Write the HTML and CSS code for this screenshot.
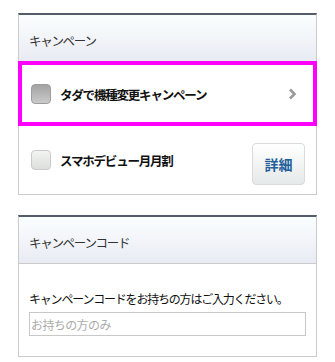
FILE: index.html
```html
<!DOCTYPE html>
<html lang="ja">
<head>
  <meta charset="UTF-8">
  <title>キャンペーン</title>
  <link rel="stylesheet" href="styles.css">
</head>
<body>
  <div class="card">
    <div class="card-head">キャンペーン</div>

    <div class="row row-active">
      <span class="check check-dark"></span>
      <span class="row-label">タダで機種変更キャンペーン</span>
      <svg class="chevron" width="9" height="12" viewBox="0 0 9 12">
        <path d="M2 1.5 L6.5 6 L2 10.5" fill="none" stroke="#9a9a9a" stroke-width="2.6"/>
      </svg>
    </div>

    <div class="row">
      <span class="check"></span>
      <span class="row-label">スマホデビュー月月割</span>
      <button class="detail-btn">詳細</button>
    </div>
  </div>

  <div class="card">
    <div class="card-head">キャンペーンコード</div>
    <div class="card-body">
      <p class="note">キャンペーンコードをお持ちの方はご入力ください。</p>
      <input type="text" class="code-input" placeholder="お持ちの方のみ">
    </div>
  </div>
</body>
</html>
```

FILE: styles.css
```css
body {
  margin: 0;
  padding: 13px 18px 0;
  background: #fff;
  font-family: "Noto Sans CJK JP", "Noto Sans", sans-serif;
  font-size: 12px;
  color: #111;
}
.card {
  border: 1px solid #cbcbcb;
  border-top: 2px solid #545c69;
  margin-bottom: 20px;
}
.card-head {
  height: 46px;
  line-height: 51px;
  padding-left: 10px;
  background: linear-gradient(#fbfefe, #e9ebf4);
  border-bottom: 1px solid #cbcbcb;
  color: #333;
  font-size: 12.5px;
  letter-spacing: -1.3px;
}
.row {
  position: relative;
  display: flex;
  align-items: center;
  padding: 0 11px 0 12px;
  height: 68px;
}
.row-active {
  height: 64px;
}
.row-active::after {
  content: "";
  position: absolute;
  top: -1px;
  left: -1px;
  right: -1px;
  bottom: 0;
  border: 4px solid #ff00ff;
}
.check {
  width: 18px;
  height: 18px;
  border: 1px solid #c9cbc9;
  border-radius: 4px;
  background: linear-gradient(#f2f3f2, #dcdfdc);
  flex-shrink: 0;
}
.check-dark {
  border-color: #9d9d9d;
  background: linear-gradient(#a3a3a3, #cacaca);
}
.row-label {
  margin-left: 9px;
  flex: 1;
  font-size: 12.5px;
  font-weight: bold;
  letter-spacing: -1.2px;
  color: #111;
}
.chevron {
  margin-right: 8px;
}
.detail-btn {
  width: 53px;
  height: 42px;
  margin-top: 8px;
  border: 1px solid #d9dbdb;
  border-radius: 4px;
  background: linear-gradient(#ffffff, #e6e9e9);
  color: #1f5f9a;
  font-family: inherit;
  font-size: 14px;
  font-weight: bold;
  padding: 0;
}
.card-body {
  padding: 27px 10px 20px;
}
.note {
  margin: 0 0 5px;
  line-height: 16px;
  letter-spacing: -1.2px;
}
.code-input {
  display: block;
  box-sizing: border-box;
  width: 100%;
  height: 24px;
  margin: 0;
  padding: 0 1px;
  border: 1px solid #c8c8c8;
  font-family: inherit;
  font-size: 12px;
  letter-spacing: -0.6px;
}
.code-input::placeholder {
  color: #ababab;
}
```
